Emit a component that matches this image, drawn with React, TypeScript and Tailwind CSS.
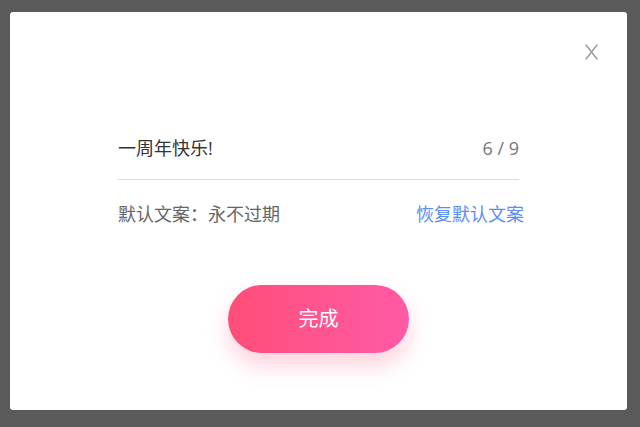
export default function App() {
  return (
    <div className="w-[640px] h-[427px] bg-[#5a5a5a] pl-[10px] pt-[12px] pr-[13px] pb-[17px]">
      <div
        className="relative h-full bg-white rounded-[3px] flex flex-col items-center"
        style={{ fontFamily: '"Open Sans", "Noto Sans CJK SC", sans-serif' }}
      >
        {/* close */}
        <button className="absolute top-[31px] right-[29px] w-[14px] h-[17px] flex items-center justify-center">
          <svg width="13" height="16" viewBox="0 0 13 16" fill="none">
            <path d="M1 1 L12 15 M12 1 L1 15" stroke="#9a9a9a" strokeWidth="1.4" strokeLinecap="round" />
          </svg>
        </button>

        <div className="w-[401px] mt-[124px]">
          <div className="flex items-center justify-between h-[24px] text-[18px] leading-[24px] mb-[19px]">
            <span className="text-[#333333]">一周年快乐!</span>
            <span className="text-[#777777]">6 / 9</span>
          </div>
          <div className="h-px bg-[#dddddd]" />
          <div className="flex items-center justify-between h-[24px] mt-[22px] mr-[-5px] text-[18px] leading-[24px]">
            <span className="text-[#666666]">默认文案：永不过期</span>
            <span className="text-[#5b8ef5] cursor-pointer">恢复默认文案</span>
          </div>
        </div>

        <button className="mt-[59px] w-[181px] h-[68px] rounded-full bg-gradient-to-r from-[#ff4d78] to-[#ff5aa6] text-white text-[20px] shadow-[0_12px_22px_rgba(255,90,130,0.28)]">
          完成
        </button>
      </div>
    </div>
  );
}
